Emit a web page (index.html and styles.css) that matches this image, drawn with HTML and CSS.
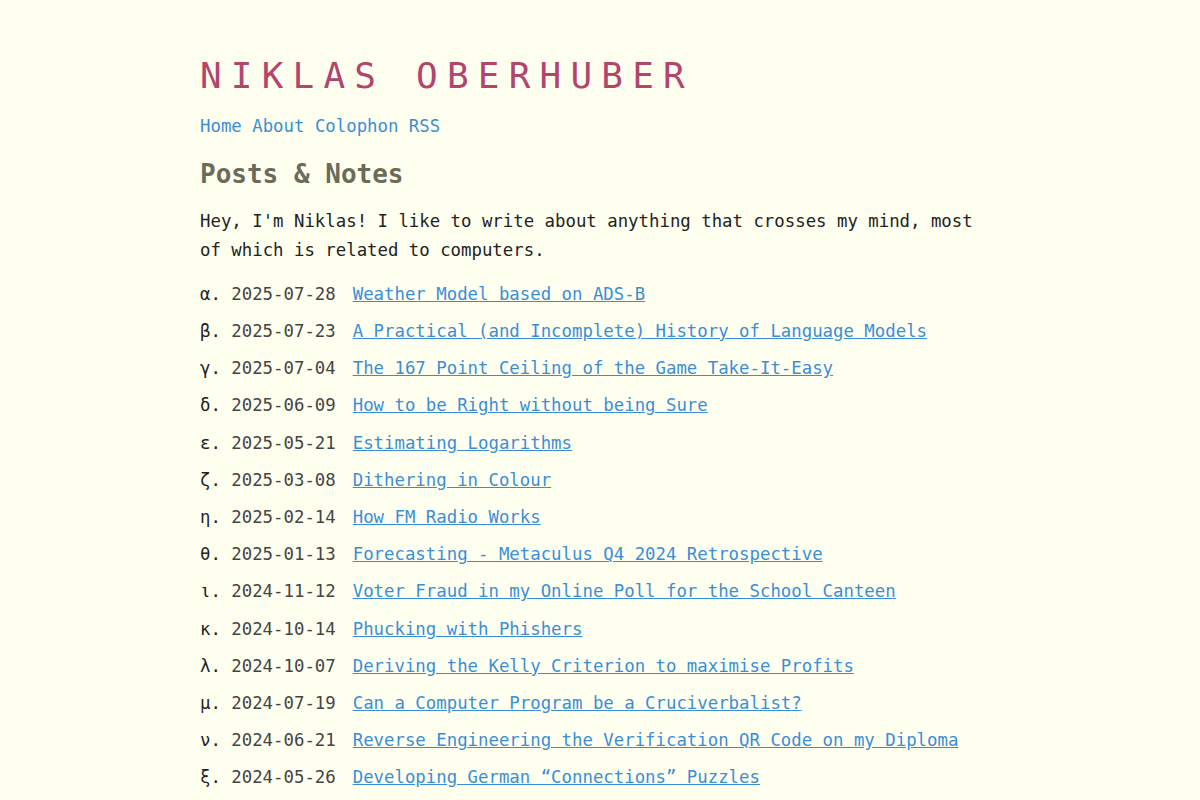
FILE: index.html
```html
<!DOCTYPE html>
<html lang="en">
  <head>
    <meta charset="UTF-8" />
    <meta name="viewport" content="width=device-width, initial-scale=1.0" />
    <title>Niklas Oberhuber</title>
    <link rel="stylesheet" href="styles.css">
  </head>
  <body>
    <main class="page">
      <header>
        <h1 class="site-title">Niklas Oberhuber</h1>
        <nav class="site-nav">
          <a href="#">Home</a>
          <a href="#">About</a>
          <a href="#">Colophon</a>
          <a href="#">RSS</a>
        </nav>
      </header>

      <h2>Posts &amp; Notes</h2>
      <p class="intro">
        Hey, I'm Niklas! I like to write about anything that crosses my mind, most
        of which is related to computers.
      </p>

      <!-- newest first, numbered with greek letters -->
      <ul class="posts">
        <li><span class="idx">α.</span><span class="date">2025-07-28</span><a href="#">Weather Model based on ADS-B</a></li>
        <li><span class="idx">β.</span><span class="date">2025-07-23</span><a href="#">A Practical (and Incomplete) History of Language Models</a></li>
        <li><span class="idx">γ.</span><span class="date">2025-07-04</span><a href="#">The 167 Point Ceiling of the Game Take-It-Easy</a></li>
        <li><span class="idx">δ.</span><span class="date">2025-06-09</span><a href="#">How to be Right without being Sure</a></li>
        <li><span class="idx">ε.</span><span class="date">2025-05-21</span><a href="#">Estimating Logarithms</a></li>
        <li><span class="idx">ζ.</span><span class="date">2025-03-08</span><a href="#">Dithering in Colour</a></li>
        <li><span class="idx">η.</span><span class="date">2025-02-14</span><a href="#">How FM Radio Works</a></li>
        <li><span class="idx">θ.</span><span class="date">2025-01-13</span><a href="#">Forecasting - Metaculus Q4 2024 Retrospective</a></li>
        <li><span class="idx">ι.</span><span class="date">2024-11-12</span><a href="#">Voter Fraud in my Online Poll for the School Canteen</a></li>
        <li><span class="idx">κ.</span><span class="date">2024-10-14</span><a href="#">Phucking with Phishers</a></li>
        <li><span class="idx">λ.</span><span class="date">2024-10-07</span><a href="#">Deriving the Kelly Criterion to maximise Profits</a></li>
        <li><span class="idx">μ.</span><span class="date">2024-07-19</span><a href="#">Can a Computer Program be a Cruciverbalist?</a></li>
        <li><span class="idx">ν.</span><span class="date">2024-06-21</span><a href="#">Reverse Engineering the Verification QR Code on my Diploma</a></li>
        <li><span class="idx">ξ.</span><span class="date">2024-05-26</span><a href="#">Developing German “Connections” Puzzles</a></li>
      </ul>
    </main>
  </body>
</html>
```

FILE: styles.css
```css
/* Reset */
* {
  margin: 0;
  padding: 0;
  box-sizing: border-box;
}

body {
  background-color: #fffff0;
  color: #222;
  font-family: "DejaVu Sans Mono", "Liberation Mono", monospace;
  font-size: 17.35px;
  line-height: 28.7px;
}

.page {
  width: 800px;
  margin: 0 auto;
  padding: 54px 0 40px;
}

a {
  color: #3a8ed6;
}

/* Header */
.site-title {
  font-size: 36px;
  line-height: 44px;
  font-weight: 500;
  letter-spacing: 9.2px;
  text-transform: uppercase;
  color: #b3446c;
}

.site-nav {
  display: flex;
  gap: 10.45px;
  margin-top: 13.5px;
}

.site-nav a {
  text-decoration: none;
}

h2 {
  font-size: 26px;
  line-height: 36px;
  color: #6b6b5a;
  margin-top: 15.3px;
}

.intro {
  margin-top: 15.7px;
}

/* Post list */
.posts {
  list-style: none;
  margin-top: 15.2px;
  display: flex;
  flex-direction: column;
  gap: 8.5px;
}

.posts li {
  display: flex;
  white-space: nowrap;
}

.posts .idx {
  width: 31.3px;
  color: #222;
}

.posts .date {
  color: #444;
  margin-right: 17px;
}
```
